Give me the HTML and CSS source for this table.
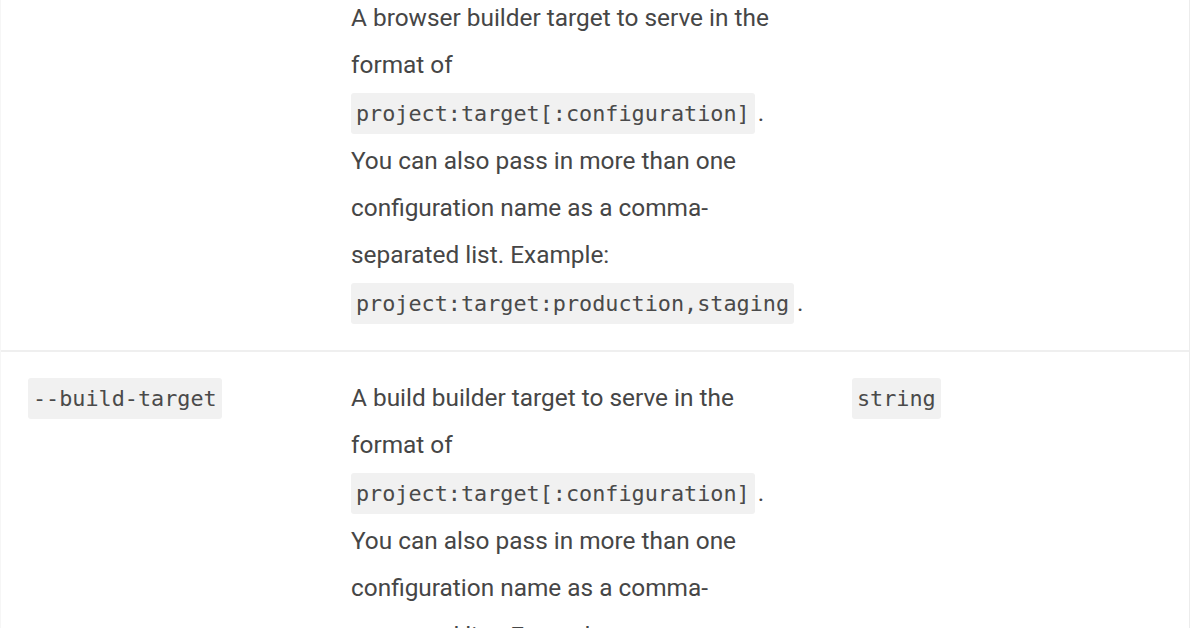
FILE: index.html
```html
<!DOCTYPE html>
<html lang="en">
<head>
    <meta charset="UTF-8">
    <meta name="viewport" content="width=device-width, initial-scale=1.0">
    <title>ng serve options</title>
    <link rel="stylesheet" href="styles.css">
</head>
<body>
    <div class="options">
        <div class="option-row">
            <div class="option-name"></div>
            <div class="option-desc">
                A browser builder target to serve in the format of
                <code>project:target[:configuration]</code>.
                You can also pass in more than one configuration name as a comma-separated list. Example:
                <code>project:target:production,staging</code>.
            </div>
            <div class="option-type"></div>
        </div>
        <div class="option-row">
            <div class="option-name"><code>--build-target</code></div>
            <div class="option-desc">
                A build builder target to serve in the format of
                <code>project:target[:configuration]</code>.
                You can also pass in more than one configuration name as a comma-separated list. Example:
                <code>project:target:production,staging</code>.
            </div>
            <div class="option-type"><code>string</code></div>
        </div>
    </div>
</body>
</html>
```

FILE: styles.css
```css
/* Pagina: tabella delle opzioni, vista ingrandita */
html, body {
    margin: 0;
    padding: 0;
    background: #ffffff;
    overflow: hidden;
}

body {
    font-family: Roboto, "Noto Sans", Arial, sans-serif;
    font-size: 24.4px;
    line-height: 47.3px;
    color: #464646;
}

.options {
    width: 1188px;
    margin-top: -28px; /* la pagina e' scrollata: la prima riga inizia sopra */
    border-right: 1px solid #ececec;
    border-left: 1px solid #f6f6f6;
}

.option-row {
    display: grid;
    grid-template-columns: 350px 501px 1fr;
    padding: 22px 0 23px;
    border-bottom: 2px solid #efefef;
}

.option-name {
    padding-left: 27px;
}

.option-desc {
    padding-right: 50px;
}

code {
    font-family: "DejaVu Sans Mono", "Liberation Mono", monospace;
    font-size: 21.8px;
    color: #4a4a4a;
    background-color: #f1f1f1;
    padding: 8px 5px;
    margin-right: 3px;
    border-radius: 3px;
}
```
